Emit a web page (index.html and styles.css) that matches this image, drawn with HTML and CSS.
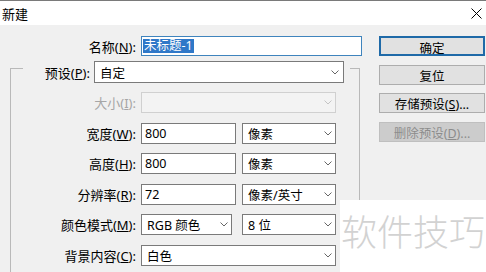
FILE: index.html
```html
<!DOCTYPE html>
<html lang="zh-CN">
<head>
    <meta charset="UTF-8">
    <title>新建</title>
    <link rel="stylesheet" href="styles.css">
</head>
<body>
    <div class="window">
        <!-- Title bar -->
        <div class="titlebar">
            <span class="title">新建</span>
            <svg class="close" width="11" height="11" viewBox="0 0 11 11">
                <path d="M0.5 0.5 L10.5 10.5 M10.5 0.5 L0.5 10.5" stroke="#000" stroke-width="1" fill="none"/>
            </svg>
        </div>

        <div class="content">
            <div class="form">
                <div class="name-row">
                    <label class="lbl name-lbl">名称(<u>N</u>):</label>
                    <div class="textbox name-box"><span class="sel">未标题-1</span></div>
                </div>

                <div class="group">
                    <div class="group-head">
                        <label class="lbl preset-lbl">预设(<u>P</u>):</label>
                        <div class="select preset">
                            <span>自定</span>
                            <svg class="chev" width="8" height="5" viewBox="0 0 8 5"><path d="M0.5 0.5 L4 4 L7.5 0.5" stroke="#666" fill="none"/></svg>
                        </div>
                    </div>

                    <div class="group-body">
                        <div class="row">
                            <label class="lbl disabled">大小(<u>I</u>):</label>
                            <div class="select full off">
                                <span></span>
                                <svg class="chev" width="8" height="5" viewBox="0 0 8 5"><path d="M0.5 0.5 L4 4 L7.5 0.5" stroke="#c4c4c4" fill="none"/></svg>
                            </div>
                        </div>
                        <div class="row">
                            <label class="lbl">宽度(<u>W</u>):</label>
                            <div class="textbox num">800</div>
                            <div class="select unit">
                                <span>像素</span>
                                <svg class="chev" width="8" height="5" viewBox="0 0 8 5"><path d="M0.5 0.5 L4 4 L7.5 0.5" stroke="#666" fill="none"/></svg>
                            </div>
                        </div>
                        <div class="row">
                            <label class="lbl">高度(<u>H</u>):</label>
                            <div class="textbox num">800</div>
                            <div class="select unit">
                                <span>像素</span>
                                <svg class="chev" width="8" height="5" viewBox="0 0 8 5"><path d="M0.5 0.5 L4 4 L7.5 0.5" stroke="#666" fill="none"/></svg>
                            </div>
                        </div>
                        <div class="row">
                            <label class="lbl">分辨率(<u>R</u>):</label>
                            <div class="textbox num">72</div>
                            <div class="select unit">
                                <span>像素/英寸</span>
                                <svg class="chev" width="8" height="5" viewBox="0 0 8 5"><path d="M0.5 0.5 L4 4 L7.5 0.5" stroke="#666" fill="none"/></svg>
                            </div>
                        </div>
                        <div class="row">
                            <label class="lbl">颜色模式(<u>M</u>):</label>
                            <div class="select mode">
                                <span>RGB 颜色</span>
                                <svg class="chev" width="8" height="5" viewBox="0 0 8 5"><path d="M0.5 0.5 L4 4 L7.5 0.5" stroke="#666" fill="none"/></svg>
                            </div>
                            <div class="select unit">
                                <span>8 位</span>
                                <svg class="chev" width="8" height="5" viewBox="0 0 8 5"><path d="M0.5 0.5 L4 4 L7.5 0.5" stroke="#666" fill="none"/></svg>
                            </div>
                        </div>
                        <div class="row">
                            <label class="lbl">背景内容(<u>C</u>):</label>
                            <div class="select full">
                                <span>白色</span>
                                <svg class="chev" width="8" height="5" viewBox="0 0 8 5"><path d="M0.5 0.5 L4 4 L7.5 0.5" stroke="#666" fill="none"/></svg>
                            </div>
                        </div>
                    </div>
                </div>
            </div>

            <!-- Right side buttons -->
            <div class="buttons">
                <button class="btn default">确定</button>
                <button class="btn">复位</button>
                <button class="btn">存储预设(<u>S</u>)...</button>
                <button class="btn" disabled>删除预设(<u>D</u>)...</button>
            </div>
        </div>

        <div class="watermark">软件技巧</div>
    </div>
</body>
</html>
```

FILE: styles.css
```css
body {
    margin: 0;
    padding: 0;
    background: #f0f0f0;
    font-family: "Noto Sans", "Noto Sans CJK SC", sans-serif;
    font-size: 12.5px;
    color: #000;
}

.window {
    position: relative;
    width: 486px;
    height: 272px;
    overflow: hidden;
}

/* Title bar */
.titlebar {
    height: 24px;
    border-top: 1px solid #7a7a7a;
    background: #fff;
    display: flex;
    align-items: center;
    justify-content: space-between;
    padding: 0 4px 0 2px;
}

.title {
    font-size: 13px;
    font-family: "Noto Sans CJK SC", sans-serif;
}

.close {
    display: block;
}

/* Main area */
.content {
    display: flex;
    padding-top: 11px;
}

.form {
    width: 362px;
}

.lbl {
    text-align: right;
    white-space: nowrap;
    font-size: 13px;
}

.lbl u,
.btn u {
    text-underline-offset: 1px;
}

.lbl.disabled {
    color: #a6a6a6;
}

.name-row {
    display: flex;
    align-items: center;
    height: 20px;
}

.name-lbl {
    width: 136px;
    margin-right: 5px;
}

.textbox {
    box-sizing: border-box;
    height: 21px;
    background: #fff;
    border: 1px solid #7a7a7a;
    display: flex;
    align-items: center;
    padding-left: 3px;
}

.name-box {
    width: 221px;
    height: 20px;
    border-color: #3f84bd;
    padding-left: 1px;
}

.sel {
    background: #2f78c8;
    color: #fff;
    line-height: 14px;
    padding: 0 1px;
}

/* Group box round the preset fields */
.group {
    margin-left: 10px;
    margin-top: 5px;
    width: 350px;
}

.group-head {
    display: flex;
    height: 22px;
}

.group-head::before,
.group-head::after {
    content: "";
    box-sizing: border-box;
    margin-top: 7px;
    border-top: 1px solid #b9b9b9;
}

.group-head::before {
    width: 13px;
    border-left: 1px solid #b9b9b9;
}

.group-head::after {
    width: 10px;
    margin-left: 6px;
    border-right: 1px solid #b9b9b9;
}

.preset-lbl {
    width: 67px;
    margin-right: 4px;
    align-self: center;
}

.select {
    box-sizing: border-box;
    height: 21px;
    background: #fff;
    border: 1px solid #7a7a7a;
    display: flex;
    align-items: center;
    justify-content: space-between;
    padding: 0 3px 0 5px;
}

.select .chev {
    display: block;
}

.preset {
    width: 250px;
    height: 22px;
    padding-right: 4px;
}

.group-body {
    border-left: 1px solid #b9b9b9;
    border-right: 1px solid #b9b9b9;
    height: 200px;
    padding-top: 9px;
    display: flex;
    flex-direction: column;
    gap: 9.6px;
}

.row {
    display: flex;
    align-items: center;
    height: 21px;
}

.row .lbl {
    width: 125px;
    margin-right: 5px;
}

.num {
    width: 95px;
    margin-right: 6px;
}

.unit {
    width: 94px;
}

.mode {
    width: 91px;
    margin-right: 10px;
}

.full {
    width: 195px;
}

.select.off {
    background: #f3f3f3;
    border-color: #d0d0d0;
}

/* Buttons */
.buttons {
    margin-left: 17px;
    width: 106px;
    display: flex;
    flex-direction: column;
    gap: 8.5px;
}

.btn {
    box-sizing: border-box;
    height: 20px;
    padding: 0;
    background: #e1e1e1;
    border: 1px solid #adadad;
    font-family: "Noto Sans", "Noto Sans CJK SC", sans-serif;
    font-size: 12.5px;
    color: #000;
}

.btn.default {
    border: 2px solid #1f6aa8;
}

.btn:disabled {
    background: #cccccc;
    border-color: #bfbfbf;
    color: #8c8c8c;
}

/* Watermark patch over the bottom right corner */
.watermark {
    position: absolute;
    left: 340px;
    top: 200px;
    width: 146px;
    height: 72px;
    box-sizing: border-box;
    background: #fff;
    padding: 12px 0 0 1px;
    font-family: "Noto Sans CJK SC", sans-serif;
    font-weight: 300;
    font-size: 36px;
    line-height: 1;
    color: #d2d2d2;
    white-space: nowrap;
}
```
